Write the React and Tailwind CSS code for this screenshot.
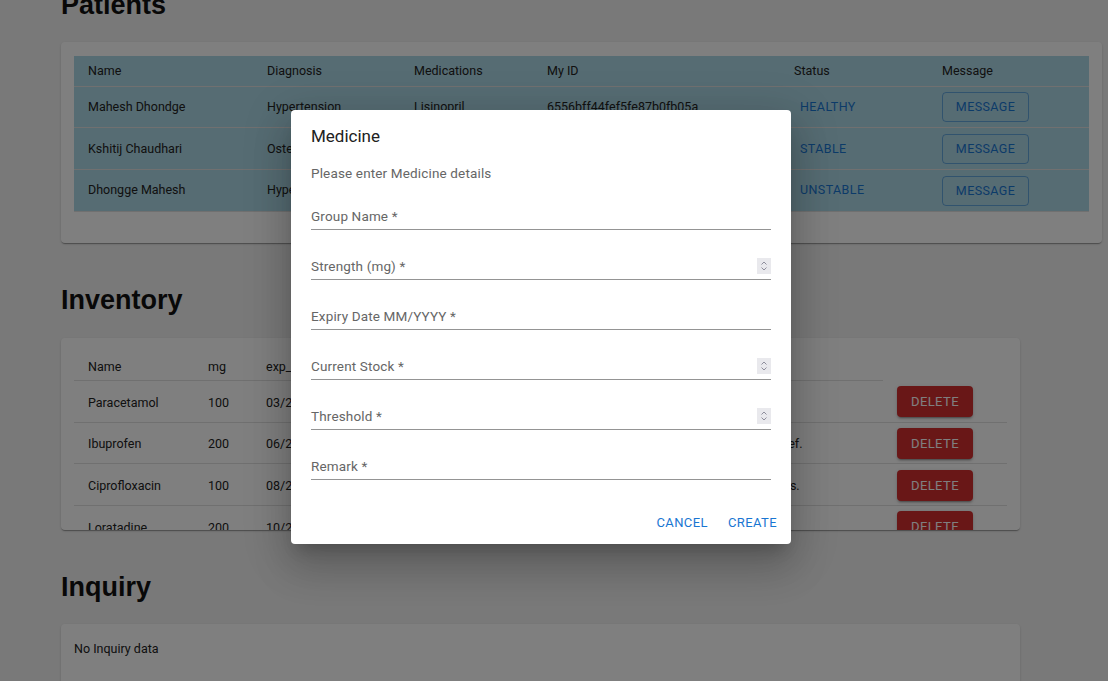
const patients = [
  { name: 'Mahesh Dhondge', diagnosis: 'Hypertension', meds: 'Lisinopril', id: '6556bff44fef5fe87b0fb05a', status: 'HEALTHY' },
  { name: 'Kshitij Chaudhari', diagnosis: 'Osteoarthritis', meds: 'Ibuprofen', id: '6556c0a24fef5fe87b0fb05e', status: 'STABLE' },
  { name: 'Dhongge Mahesh', diagnosis: 'Hypertension', meds: 'Amlodipine', id: '6556c1194fef5fe87b0fb062', status: 'UNSTABLE' },
];

const inventory = [
  { name: 'Paracetamol', mg: 100, exp: '03/2025', stock: 250, threshold: 50, remark: 'For fever.' },
  { name: 'Ibuprofen', mg: 200, exp: '06/2025', stock: 180, threshold: 40, remark: 'Anti-inflammatory, pain relief.' },
  { name: 'Ciprofloxacin', mg: 100, exp: '08/2025', stock: 120, threshold: 30, remark: 'Used for bacterial infections.' },
  { name: 'Loratadine', mg: 200, exp: '10/2025', stock: 90, threshold: 20, remark: 'Allergy relief.' },
];

const fields = [
  { label: 'Group Name *', number: false },
  { label: 'Strength (mg) *', number: true },
  { label: 'Expiry Date MM/YYYY *', number: false },
  { label: 'Current Stock *', number: true },
  { label: 'Threshold *', number: true },
  { label: 'Remark *', number: false },
];

const cardShadow = 'shadow-[0_2px_1px_-1px_rgba(0,0,0,0.2),0_1px_1px_0_rgba(0,0,0,0.14),0_1px_3px_0_rgba(0,0,0,0.12)]';

function Spinner() {
  return (
    <span className="absolute right-0 top-[1px] flex h-[16px] w-[14px] items-center justify-center bg-[#e9e9ed]">
      <svg width="14" height="16" viewBox="0 0 14 16" fill="none" stroke="#8f8f9d" strokeWidth="1">
        <path d="M4.5 6.5 L7 4 L9.5 6.5" />
        <path d="M4.5 9.5 L7 12 L9.5 9.5" />
      </svg>
    </span>
  );
}

function Heading({ children, className }) {
  return (
    <h2 className={`font-['Liberation_Sans',Arial,sans-serif] text-[27px] font-bold leading-[32px] text-[#111] ${className}`}>
      {children}
    </h2>
  );
}

export default function App() {
  return (
    <div className="relative h-[681px] w-[1108px] overflow-hidden bg-[#f3f3f3] font-['Roboto',Arial,sans-serif] text-[12.5px] text-[#222]">
      <div className="pl-[61px]">
        <Heading className="mt-[-11px] mb-[21px]">Patients</Heading>

        {/* patients card */}
        <div className={`w-[1041px] rounded-[4px] bg-white pt-[14px] pb-[31px] pl-[13px] ${cardShadow}`}>
          <table className="w-[1015px] table-fixed border-collapse bg-[#add8e6]">
            <colgroup>
              <col className="w-[179px]" />
              <col className="w-[147px]" />
              <col className="w-[133px]" />
              <col className="w-[247px]" />
              <col className="w-[148px]" />
              <col className="w-[161px]" />
            </colgroup>
            <thead>
              <tr className="h-[30px] text-left">
                {['Name', 'Diagnosis', 'Medications', 'My ID', 'Status', 'Message'].map((h) => (
                  <th key={h} className="border-b border-[#e0e0e0] pt-[1px] pl-[14px] font-normal">{h}</th>
                ))}
              </tr>
            </thead>
            <tbody>
              {patients.map((p) => (
                <tr key={p.name} className="h-[41.7px]">
                  <td className="border-b border-[#e0e0e0] pt-[1px] pl-[14px]">{p.name}</td>
                  <td className="border-b border-[#e0e0e0] pt-[1px] pl-[14px]">{p.diagnosis}</td>
                  <td className="border-b border-[#e0e0e0] pt-[1px] pl-[14px]">{p.meds}</td>
                  <td className="border-b border-[#e0e0e0] pt-[1px] pl-[14px]">{p.id}</td>
                  <td className="border-b border-[#e0e0e0] pt-[1px] pl-[12px]">
                    <button className="px-[8px] py-[5px] tracking-[0.4px] text-[#1976d2]">{p.status}</button>
                  </td>
                  <td className="border-b border-[#e0e0e0] pt-[1px] pl-[14px]">
                    <button className="h-[30px] w-[87px] rounded-[4px] border border-[#1976d2]/50 pt-[1px] tracking-[0.4px] text-[#1976d2]">MESSAGE</button>
                  </td>
                </tr>
              ))}
            </tbody>
          </table>
        </div>

        <Heading className="mt-[41px] mb-[22px]">Inventory</Heading>

        {/* inventory card */}
        <div className={`h-[192px] w-[959px] overflow-hidden rounded-[4px] bg-white pt-[13px] pl-[13px] ${cardShadow}`}>
          <table className="w-[933px] table-fixed border-collapse">
            <colgroup>
              <col className="w-[120px]" />
              <col className="w-[58px]" />
              <col className="w-[110px]" />
              <col className="w-[120px]" />
              <col className="w-[144px]" />
              <col className="w-[257px]" />
              <col className="w-[124px]" />
            </colgroup>
            <thead>
              <tr className="h-[30px] text-left">
                {['Name', 'mg', 'exp_date', 'current_stock', 'threshold', 'remark'].map((h) => (
                  <th key={h} className="border-b border-[#e0e0e0] pt-[4px] pl-[14px] font-normal">{h}</th>
                ))}
              </tr>
            </thead>
            <tbody>
              {inventory.map((m) => (
                <tr key={m.name} className="h-[41.7px]">
                  <td className="border-b border-[#e0e0e0] pt-[3px] pl-[14px]">{m.name}</td>
                  <td className="border-b border-[#e0e0e0] pt-[3px] pl-[14px]">{m.mg}</td>
                  <td className="border-b border-[#e0e0e0] pt-[3px] pl-[14px]">{m.exp}</td>
                  <td className="border-b border-[#e0e0e0] pt-[3px] pl-[14px]">{m.stock}</td>
                  <td className="border-b border-[#e0e0e0] pt-[3px] pl-[14px]">{m.threshold}</td>
                  <td className="border-b border-[#e0e0e0] pt-[3px] pl-[14px]">{m.remark}</td>
                  <td className="border-b border-[#e0e0e0] pt-[1px] pl-[14px]">
                    <button className="h-[31px] w-[76px] rounded-[4px] bg-[#d32f2f] text-[13px] tracking-[0.4px] text-white shadow-[0_3px_1px_-2px_rgba(0,0,0,0.2),0_2px_2px_0_rgba(0,0,0,0.14),0_1px_5px_0_rgba(0,0,0,0.12)]">DELETE</button>
                  </td>
                </tr>
              ))}
            </tbody>
          </table>
        </div>

        <Heading className="mt-[41px] mb-[21px]">Inquiry</Heading>

        <div className={`h-[100px] w-[959px] rounded-[4px] bg-white pt-[16px] pl-[13px] ${cardShadow}`}>
          <p className="leading-[18px]">No Inquiry data</p>
        </div>
      </div>

      {/* dialog backdrop */}
      <div className="absolute inset-0 flex items-center justify-center bg-black/50 pr-[26px] pb-[27px]">
        <div className="w-[500px] rounded-[4px] bg-white px-[20px] pt-[16px] pb-[6px] text-[13.5px] shadow-[0_11px_15px_-7px_rgba(0,0,0,0.2),0_24px_38px_3px_rgba(0,0,0,0.14),0_9px_46px_8px_rgba(0,0,0,0.12)]">
          <h3 className="text-[17px] leading-[20px] font-normal text-[#212121]">Medicine</h3>
          <p className="mt-[18px] leading-[18px] tracking-[0.15px] text-[#666]">Please enter Medicine details</p>
          <div className="mt-[25px] flex flex-col gap-[27px]">
            {fields.map((f) => (
              <div key={f.label} className="relative border-b border-[#949494] pb-[4px]">
                <span className="block leading-[18px] tracking-[0.15px] text-[#666]">{f.label}</span>
                {f.number && <Spinner />}
              </div>
            ))}
          </div>
          <div className="mt-[28px] mr-[-14px] flex justify-end gap-[4px] text-[13px]">
            <button className="px-[8px] py-[6px] leading-[18px] tracking-[0.4px] text-[#1976d2]">CANCEL</button>
            <button className="px-[8px] py-[6px] leading-[18px] tracking-[0.4px] text-[#1976d2]">CREATE</button>
          </div>
        </div>
      </div>
    </div>
  );
}
